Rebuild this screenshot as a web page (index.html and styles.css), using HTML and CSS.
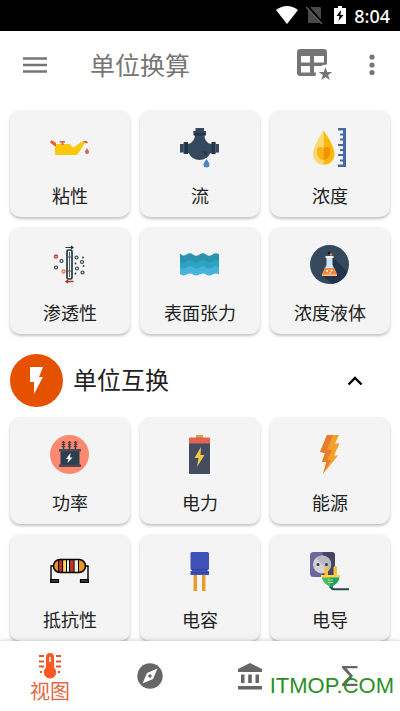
FILE: index.html
```
<!DOCTYPE html>
<html lang="zh-CN">
<head>
<meta charset="utf-8">
<meta name="viewport" content="width=device-width, initial-scale=1">
<title>单位换算</title>
<link rel="stylesheet" href="styles.css">
</head>
<body>
<div class="status">
  <svg width="22" height="18" viewBox="0 0 22 18"><path fill="#fff" d="M0 4Q11-4 22 4L11 18Z"/></svg>
  <svg width="18" height="20" viewBox="0 0 18 20"><path fill="#4a4a4a" d="M5 2H14Q15 2 15 3V18H2V5Z"/><path stroke="#000" stroke-width="3" d="M1 1 17 19"/><path stroke="#666" stroke-width="1.200" d="M0 2 16 19"/></svg>
  <svg width="12" height="18" viewBox="0 0 12 18"><path fill="#fff" d="M4 0H8V2H12V18H0V2H4Z"/><path fill="#000" d="M7 4 2.500 10H5.500L4.500 15 9.500 9H6.500Z"/></svg>
  <span class="clock">8:04</span>
</div>

<header class="appbar">
  <button class="icon-btn" aria-label="菜单"><svg width="24" height="16" viewBox="0 0 24 16"><path stroke="#757575" stroke-width="2.500" d="M0 1.500H24M0 8H24M0 14.500H24"/></svg></button>
  <h1 class="title">单位换算</h1>
  <button class="icon-btn" aria-label="收藏"><svg width="36" height="32" viewBox="0 0 36 32"><path fill="#757575" fill-rule="evenodd" d="M3 0H27Q30 0 30 3V15.500Q26 15.500 24 17H17V23.500H19L18.500 27H3Q0 27 0 24V3Q0 0 3 0ZM4 7V13.500H13V7ZM17 7V13.500H27V7ZM4 17V23.500H13V17Z"/><path fill="#757575" d="M28.500 18 30.200 22.900 35.300 23 31.200 26.100 32.700 31 28.500 28.100 24.300 31 25.800 26.100 21.700 23 26.800 22.900Z"/></svg></button>
  <button class="icon-btn" aria-label="更多"><svg width="6" height="22" viewBox="0 0 6 22"><g fill="#757575"><circle cx="3" cy="3" r="2.600"/><circle cx="3" cy="11" r="2.600"/><circle cx="3" cy="18.500" r="2.600"/></g></svg></button>
</header>

<main class="content">
  <section class="grid" aria-label="流体">
    <button class="card">
      <svg class="pic" viewBox="0 0 40 40"><path fill="#fdc70c" d="M5 16H20Q22 20 24 19L33 13 36 13.500 27 27H5Z"/><path fill="#e0633c" d="M1.500 12 6 15V18L4.500 18 0 14.500ZM9.500 13H15V14.500H13.500V17H11.500V14.500H9.500ZM33 14Q35 11.500 38 14L37 15.500 34.500 14.500ZM37 20Q39 23 39 24A2 2 0 0 1 35 24Q35 23 37 20Z"/></svg>
      <span>粘性</span>
    </button>
    <button class="card">
      <svg class="pic" viewBox="0 0 40 40"><path fill="#34495e" d="M15.500 0H24V3H15.500ZM15 7H24.500Q24 12 29 15.500L32 16V25L30 25.500Q27 32 19.500 32T9 25.500L7 25V16L10 15.500Q15 12 15 7ZM0 16H4V24.500H0ZM35 16H39V24.500H35Z"/><path fill="#243447" d="M13.500 3H26V7.500H13.500ZM4 14H8V26H4ZM31.500 14H35.500V26H31.500ZM22 23 27 24 27 28Z"/><path stroke="#5d6e80" stroke-width=".7" d="M13 4H26M3.800 14V26M35.500 14V26"/><path fill="#4e87c0" d="M26.500 31Q29.500 35 29.500 36.500A3 3 0 0 1 23.500 36.500Q23.500 35 26.500 31Z"/></svg>
      <span>流</span>
    </button>
    <button class="card">
      <svg class="pic" viewBox="0 0 40 40"><path fill="#f9d976" d="M13.500 2.500Q3 18 3 26A10.500 11 0 0 0 13.500 37Z"/><path fill="#fdb908" d="M13.500 2.500Q24.500 18 24.500 26A10.500 11 0 0 1 13.500 37Z"/><path fill="#fcb414" d="M7 20Q10 18 13.500 20V32A7 7 0 0 1 7 25Z"/><path fill="#f39200" d="M13.500 20Q17 18 20 20V25A7 7 0 0 1 13.500 32Z"/><path fill="#4768a4" d="M28 0H36V39H28V36.500H33V33.500H30V31.500H33V28H28V26H33V23H30V21H33V18H28V16H33V12.500H30V10.500H33V7.500H30V5.500H33V2.500H28Z"/></svg>
      <span>浓度</span>
    </button>
    <button class="card">
      <svg class="pic" viewBox="0 0 40 40" fill="none"><rect x="17" y="5" width="5" height="29" rx="1.500" stroke="#263640" stroke-width="1.700"/><path stroke="#52616a" d="M19.500 7V32M17 12H22M17 26H22"/><path stroke="#263640" stroke-width="1.200" d="M15.500 2.500H23M21 1 23 2.500 21 4"/><path stroke="#b5302b" stroke-width="1.300" d="M23.500 36.500H16M18 35 16 36.500 18 38"/><g stroke="#34434c" stroke-width="1.200"><circle cx="11.500" cy="16" r="1.500"/><circle cx="6" cy="22.500" r="1.500"/><circle cx="26.500" cy="12.500" r="1.500"/><circle cx="32" cy="17" r="1.500"/><circle cx="27" cy="23.500" r="1.500"/><circle cx="32.500" cy="27.500" r="1.500"/></g><circle cx="6" cy="11.500" r="1.500" stroke="#c53030" stroke-width="1.300"/><circle cx="13.500" cy="26.500" r="1.500" stroke="#e77a35" stroke-width="1.300"/><g fill="#263640"><circle cx="33" cy="12.500" r=".9"/><circle cx="25.500" cy="18.500" r=".9"/><circle cx="33.500" cy="21" r=".9"/><circle cx="25.500" cy="28.500" r=".9"/></g></svg>
      <span>渗透性</span>
    </button>
    <button class="card">
      <svg class="pic" viewBox="0 0 40 40"><path fill="#2a93ae" d="M0 8.500Q3 12 6.500 9.500T13 9.500 19.500 9.500 26 9.500 32.500 9.500 39 9.500V20H0Z"/><path fill="#2fa3c4" d="M0 16Q3 19 6.500 16.500T13 16.500 19.500 16.500 26 16.500 32.500 16.500 39 16.500V25H0Z"/><path fill="#45b3dc" d="M0 22Q3 25 6.500 22.500T13 22.500 19.500 22.500 26 22.500 32.500 22.500 39 22.500V29.500Q36 27.500 32.500 29.500T26 29.500 19.500 29.500 13 29.500 6.500 29.500 0 29Z"/></svg>
      <span>表面张力</span>
    </button>
    <button class="card">
      <svg class="pic" viewBox="0 0 40 40"><circle cx="19.500" cy="19.500" r="19.500" fill="#34495e"/><path fill="#213449" d="M22.500 12 37.500 27A19.500 19.500 0 0 1 22 39L13 31Z"/><path fill="#cfe5fa" d="M16.500 12H22.500V20L25 25H14L16.500 20Z"/><path fill="#f5f9fc" d="M15.500 11H23.500V13H15.500Z"/><path fill="#f0883e" d="M14.500 23H24.500L27 29Q27.500 31 26 31H13Q11.500 31 12 29Z"/><path fill="#f9c08d" d="M12 29.500H27V31H12Z"/><g fill="#fff"><circle cx="17" cy="26" r="1"/><circle cx="21.500" cy="25.500" r="1"/><circle cx="20" cy="28" r=".8"/></g><circle cx="19" cy="8" r="1.300" fill="#111"/><circle cx="21" cy="9.500" r="1.300" fill="#e77e3a"/></svg>
      <span>浓度液体</span>
    </button>
  </section>

  <div class="section-head">
    <svg class="badge" viewBox="0 0 53 53"><circle cx="26.500" cy="26.500" r="26.500" fill="#e65100"/><path fill="#fff" d="M20 13H33L29 23H33L24 40V28H20Z"/></svg>
    <h2 class="section-title">单位互换</h2>
    <button class="toggle" aria-label="收起"><svg width="16" height="10" viewBox="0 0 16 10"><path fill="none" stroke="#000" stroke-width="2.400" d="M1.500 8.500 8 2 14.500 8.500"/></svg></button>
  </div>

  <section class="grid" aria-label="电">
    <button class="card">
      <svg class="pic" viewBox="0 0 40 40"><circle cx="19.500" cy="19.500" r="19.500" fill="#ff8870"/><path fill="#2d3e50" d="M10.500 15H29.500V31H10.500Z"/><path fill="#4c4b53" d="M9 14H31V16.500H9ZM9 29.500H31V32H9Z"/><path stroke="#2d3e50" stroke-width="1.400" d="M13.500 6V14M19.500 6V14M25.500 6V14"/><path stroke="#5b4148" stroke-width="3.400" stroke-dasharray="1.200 .8" d="M13.500 7V13M19.500 7V13M25.500 7V13"/><path fill="#fff" d="M20.500 18 16 24H18.500L17.500 28 22.500 22.500H20Z"/></svg>
      <span>功率</span>
    </button>
    <button class="card">
      <svg class="pic" viewBox="0 0 40 40"><path fill="#dba04b" d="M16 0H23V3H16Z"/><path fill="#454b60" d="M9 8H30V38Q30 39 29 39H10Q9 39 9 38Z"/><path fill="#e2634f" d="M10 2.500H29Q30 2.500 30 3.500V8.500H9V3.500Q9 2.500 10 2.500Z"/><path fill="#f0cb45" d="M21 12 14.500 23H18.500L17 32 24.500 20H20.500Z"/></svg>
      <span>电力</span>
    </button>
    <button class="card">
      <svg class="pic" viewBox="0 0 40 40"><path fill="#f5a028" d="M17 0H29L25 8.500H29.500L24 20.500H28L13 39 16.500 27H12L15 18 10 17Z"/><path fill="#e77d2c" d="M17 0H23L17 15H22L17 25H21L13 39 16.500 27H12L15 18 10 17Z"/></svg>
      <span>能源</span>
    </button>
    <button class="card">
      <svg class="pic" viewBox="0 0 40 40"><path fill="none" stroke="#000" stroke-width="1.400" d="M4 14H1V28M35 14H38V28"/><path fill="#333" stroke="#000" stroke-width="1.200" d="M.6 27.500H8.500V30.500H.6ZM30.500 27.500H38.400V30.500H30.500Z"/><rect x="3.500" y="7.500" width="32" height="13" rx="6.500" fill="#e69a25"/><path fill="#b8322f" d="M9 8H12V20H9ZM20 8H23.500V20H20Z"/><path fill="#f8dc58" d="M13.500 8H16V20H13.500Z"/><path fill="#eee" d="M17 8H19V20H17ZM24.500 8H28V20H24.500Z"/><path stroke="#000" d="M8.500 8V20M12.500 8V20M16.500 8V20M19.500 8V20M24 8V20M28.500 8V20"/><rect x="3.500" y="7.500" width="32" height="13" rx="6.500" fill="none" stroke="#000" stroke-width="1.500"/></svg>
      <span>抵抗性</span>
    </button>
    <button class="card">
      <svg class="pic" viewBox="0 0 40 40"><path fill="#e99d2b" d="M13.500 22H17V39H13.500ZM22 22H25.500V39H22Z"/><path fill="#3f51b5" d="M11.500 0H27.500Q29 0 29 1.500V17H27.500V19H29V23H10.500V19H12V17H10.500V1.500Q10.500 0 11.500 0Z"/><path stroke="#303f9f" d="M11 17.500H28.500M11 20.500H28.500"/></svg>
      <span>电容</span>
    </button>
    <button class="card">
      <svg class="pic" viewBox="0 0 40 40"><rect width="25" height="25" rx="3.500" fill="#6b679f"/><path fill="#474463" d="M12.500 0H21.500Q25 0 25 3.500V25H12.500Z"/><circle cx="12" cy="12.500" r="9" fill="#d3d3d8"/><path fill="#b9b9c2" d="M6 6A9 9 0 0 1 18.500 19Z"/><circle cx="8" cy="12.500" r="1.500" fill="#3c3a55"/><circle cx="16.500" cy="12.500" r="1.500" fill="#3c3a55"/><path fill="#f9c23c" d="M14.500 16Q14.500 14.500 16 14.500T18 16V24H14.500ZM23.500 15.500Q23.500 14 25.300 14T27 15.500V24H23.500Z"/><path fill="#17a673" d="M12 25H29.500Q29 31 23 34V36H19V34Q13 31 12 25Z"/><path fill="#43bd6c" d="M12 25H20V36H19V34Q13 31 12 25Z"/><path fill="#ffd43b" d="M11 23H30V25.500H11ZM18 27.500H23V28.500H18ZM18 30H23V31H18Z"/><path fill="none" stroke="#26494d" stroke-width="2" d="M21 35Q21.500 37.200 24 37.200H39"/></svg>
      <span>电导</span>
    </button>
  </section>
</main>

<nav class="tabs">
  <a class="tab active" href="#view"><svg width="24" height="26" viewBox="0 0 24 26"><path fill="#ff5722" d="M8 4A4 4 0 0 1 16 4V14.500A6.200 6.200 0 1 1 8 14.500Z"/><path stroke="#fff" stroke-width="1.600" d="M12 4V9"/><path stroke="#e0582e" stroke-width="2" d="M1 3H6M1 8.500H6M1 13.500H6M2 19H4M18 3H23M18 8.500H23M18 13.500H23M20 19H22"/></svg><span>视图</span></a>
  <a class="tab" href="#explore" aria-label="探索"><svg width="26" height="26" viewBox="0 0 26 26"><circle cx="13" cy="13" r="12.700" fill="#666"/><path fill="#fff" fill-rule="evenodd" d="M20.500 5.500 16 16 5.500 20.500 10 10ZM13 11.300A1.700 1.700 0 1 0 13 14.700 1.700 1.700 0 1 0 13 11.300Z"/></svg></a>
  <a class="tab" href="#bank" aria-label="金融"><svg width="24" height="27" viewBox="0 0 24 27"><path fill="#666" d="M12 0 24 6V9H0V6ZM3 11.500H6.500V20H3ZM10.200 11.500H13.800V20H10.200ZM17.500 11.500H21V20H17.500ZM0 23H24V26.500H0Z"/></svg></a>
  <a class="tab" href="#math" aria-label="数学"><svg width="16" height="20" viewBox="0 0 16 20"><path fill="#666" d="M0 0H15.500V2.300H4.500L11 10 4.500 17.700H15.500V20H0V18L7.500 10 0 2Z"/></svg></a>
  <span class="watermark">ITMOP.COM</span>
</nav>
</body>
</html>
```
FILE: styles.css
```
* { box-sizing: border-box; }

body {
  margin: 0;
  height: 100vh;
  display: flex;
  flex-direction: column;
  overflow: hidden;
  background: #fff;
  color: #212121;
  font-family: "Noto Sans CJK SC", sans-serif;
}

svg { display: block; flex: none; }

button {
  border: 0;
  padding: 0;
  background: none;
  color: inherit;
  font: inherit;
}

.status {
  flex: none;
  height: 31px;
  padding: 0 10px 2px;
  display: flex;
  align-items: center;
  justify-content: flex-end;
  gap: 8px;
  background: #000;
}

.clock {
  padding-top: 3px;
  color: #fff;
  font: 500 18px/24px "Noto Sans", sans-serif;
}

.status svg:nth-child(3) { margin-left: 2px; }

.appbar {
  flex: none;
  height: 69px;
  padding: 0 25px 2px 23px;
  display: flex;
  align-items: center;
}

.title {
  flex: 1;
  margin: 0 0 0 43px;
  padding-bottom: 2px;
  color: #757575;
  font-size: 25px;
  font-weight: 400;
  line-height: 36px;
}

.appbar .icon-btn:last-child { margin-left: 36px; }

.content {
  flex: 1;
  min-height: 0;
  overflow: hidden;
  padding: 10px 10px 0;
}

.grid {
  display: grid;
  grid-template-columns: repeat(3, 1fr);
  gap: 10px;
}

.card {
  display: flex;
  flex-direction: column;
  align-items: center;
  gap: 15px;
  padding: 18px 0 10px;
  border-radius: 10px;
  background: #f4f4f4;
  box-shadow: 0 2px 3px rgba(0, 0, 0, 0.24);
  font-size: 18px;
  font-weight: 400;
  line-height: 24px;
}

.pic { width: 40px; height: 40px; }

.section-head {
  display: flex;
  align-items: center;
  padding: 20px 27px 10px 0;
}

.badge { width: 53px; height: 53px; }

.section-title {
  flex: 1;
  margin: 0 0 0 10px;
  padding-bottom: 3px;
  font-size: 24px;
  font-weight: 400;
  line-height: 36px;
}

.tabs {
  position: relative;
  flex: none;
  height: 70px;
  display: grid;
  grid-template-columns: repeat(4, 1fr);
  background: #fff;
  box-shadow: 0 -1px 4px rgba(0, 0, 0, 0.16);
}

.tab {
  display: flex;
  flex-direction: column;
  align-items: center;
  justify-content: center;
  color: #666;
  text-decoration: none;
}

.tab.active {
  padding-top: 3px;
  color: #e2683f;
  font-size: 20px;
  font-weight: 400;
  line-height: 24px;
}

.watermark {
  position: absolute;
  right: 6px;
  bottom: 13px;
  color: #2c8f1f;
  font: 22px/24px "Liberation Sans", sans-serif;
}
```
